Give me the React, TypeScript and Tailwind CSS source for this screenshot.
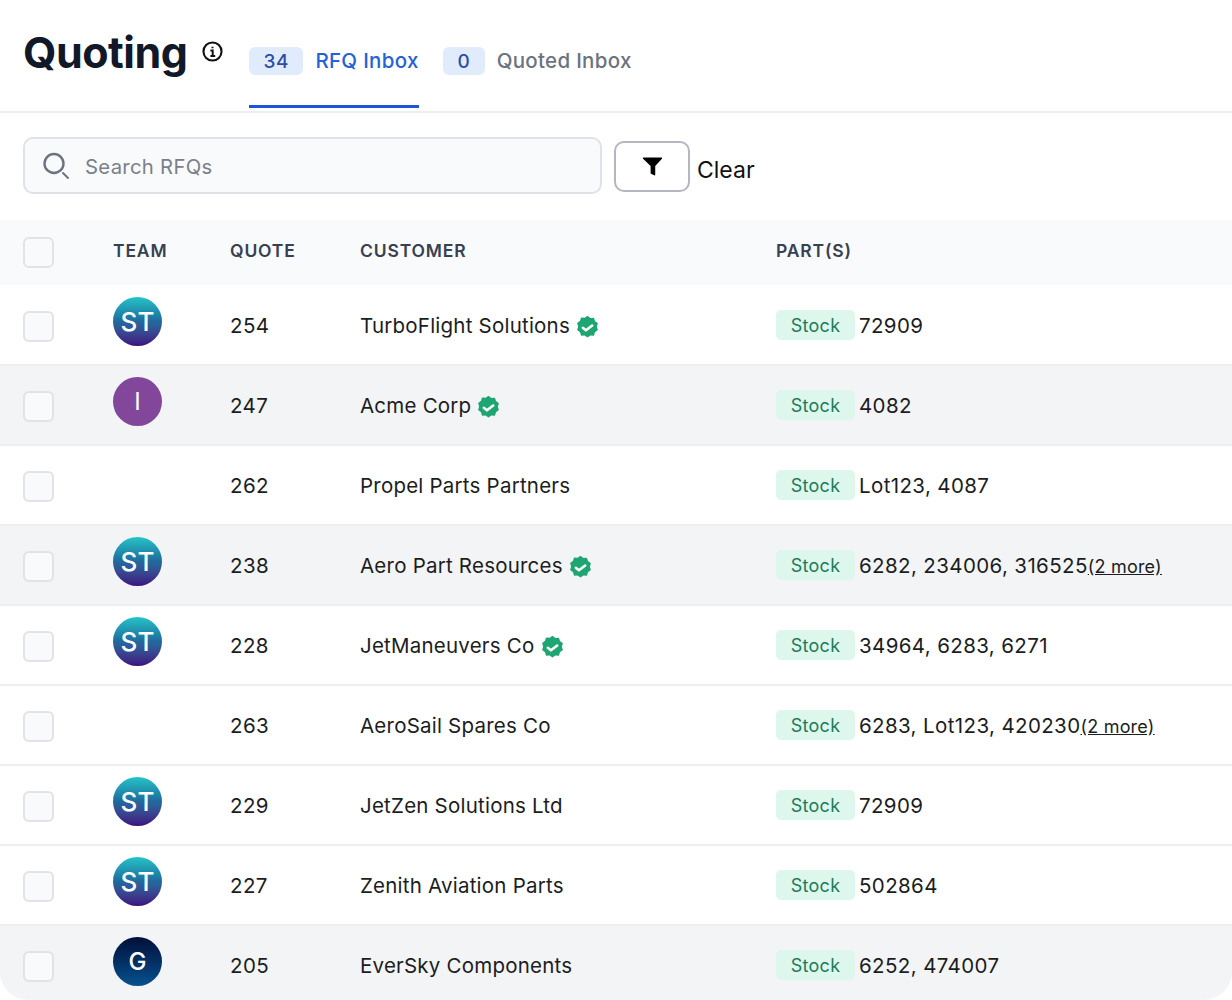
type Row = {
  quote: string;
  customer: string;
  verified?: boolean;
  parts: string;
  more?: boolean;
  team?: "ST" | "I" | "G";
  shaded?: boolean;
};

const rows: Row[] = [
  { quote: "254", customer: "TurboFlight Solutions", verified: true, parts: "72909", team: "ST" },
  { quote: "247", customer: "Acme Corp", verified: true, parts: "4082", team: "I", shaded: true },
  { quote: "262", customer: "Propel Parts Partners", parts: "Lot123, 4087" },
  { quote: "238", customer: "Aero Part Resources", verified: true, parts: "6282, 234006, 316525", more: true, team: "ST", shaded: true },
  { quote: "228", customer: "JetManeuvers Co", verified: true, parts: "34964, 6283, 6271", team: "ST" },
  { quote: "263", customer: "AeroSail Spares Co", parts: "6283, Lot123, 420230", more: true },
  { quote: "229", customer: "JetZen Solutions Ltd", parts: "72909", team: "ST" },
  { quote: "227", customer: "Zenith Aviation Parts", parts: "502864", team: "ST" },
  { quote: "205", customer: "EverSky Components", parts: "6252, 474007", team: "G", shaded: true },
];

function Avatar({ team }: { team: "ST" | "I" | "G" }) {
  if (team === "I") {
    return (
      <div className="-mt-[9px] flex h-[49px] w-[49px] items-center justify-center rounded-full bg-[#82479b] text-[24px] text-white">
        I
      </div>
    );
  }
  if (team === "G") {
    return (
      <div className="-mt-[9px] flex h-[49px] w-[49px] items-center justify-center rounded-full bg-gradient-to-b from-[#020f3a] to-[#07528f] text-[24px] font-medium text-white">
        G
      </div>
    );
  }
  return (
    <div className="-mt-[9px] flex h-[49px] w-[49px] items-center justify-center rounded-full bg-gradient-to-b from-[#25c4c6] via-[#1f6a9c] to-[#3c1180] text-[26px] font-medium text-white">
      ST
    </div>
  );
}

function VerifiedBadge() {
  return (
    <svg viewBox="0 0 24 24" className="ml-[5px] mt-[3px] h-[25px] w-[25px] shrink-0">
      <path
        fill="#1ea672"
        d="M12 .8l2.800 2 3.400-.2 1 3.200 2.800 2.100-1 3.300 1 3.300-2.800 2.100-1 3.200-3.400-.2-2.800 2-2.800-2-3.400.2-1-3.200L2 14.300l1-3.300-1-3.300 2.800-2.100 1-3.200 3.400.2z"
      />
      <path d="M7.500 12.300l3 2.400 6-4.600" fill="none" stroke="#fff" strokeWidth="2.500" strokeLinecap="round" strokeLinejoin="round" />
    </svg>
  );
}

function Checkbox() {
  return <div className="h-[31px] w-[31px] rounded-[6px] border-2 border-[#e1e3e7] bg-[#f9fafb]" />;
}

export default function App() {
  return (
    <div className="h-[1000px] w-[1232px] overflow-hidden rounded-b-[28px] bg-white font-['Inter',sans-serif] text-[#1b1d21]">
      <header className="flex h-[113px] border-b-2 border-[#eceef0] pl-[23px]">
        <h1 className="mt-[24px] text-[43px] font-bold leading-[56px] tracking-[-0.5px] text-[#111827]">Quoting</h1>
        <svg viewBox="0 0 20 20" className="ml-[15px] mt-[41px] h-[21px] w-[21px]" fill="none" stroke="#111" strokeWidth="2">
          <circle cx="10" cy="10" r="8.600" />
          <path d="M8 9h2.200v5M8 14.200h4.600M10 5.400v1.400" strokeWidth="1.900" />
        </svg>
        <nav className="ml-[26px] flex gap-[24px]">
          <div className="flex h-[108px] items-start gap-[12px] border-b-[3px] border-[#1d56d8] pt-[47px]">
            <span className="flex h-[28px] w-[54px] items-center justify-center rounded-[6px] bg-[#e0ecfc] pt-[2px] text-[19px] font-medium tracking-[0.6px] text-[#2f4da5]">34</span>
            <span className="text-[20.500px] font-medium leading-[28px] tracking-[0.3px] text-[#2563d3]">RFQ Inbox</span>
          </div>
          <div className="flex items-start gap-[12px] pt-[47px]">
            <span className="flex h-[28px] w-[42px] items-center justify-center rounded-[6px] bg-[#e0ecfc] pt-[2px] text-[19px] font-medium text-[#2f4da5]">0</span>
            <span className="text-[20.500px] font-medium leading-[28px] tracking-[0.3px] text-[#6b7280]">Quoted Inbox</span>
          </div>
        </nav>
      </header>

      <div className="flex h-[107px] pl-[23px] pt-[24px]">
        <div className="flex h-[57px] w-[579px] items-center rounded-[10px] border-2 border-[#dfe2e7] bg-[#f9fafb] pl-[17px]">
          <svg viewBox="0 0 28 28" className="h-[28px] w-[28px]" fill="none" stroke="#6b7280" strokeLinecap="round">
            <circle cx="12" cy="11.500" r="9.500" strokeWidth="2.400" />
            <path d="M21 21l5 5" strokeWidth="2" />
          </svg>
          <span className="ml-[15px] pt-[4px] text-[20.300px] tracking-[0.3px] text-[#7a808a]">Search RFQs</span>
        </div>
        <button className="ml-[12px] mt-[4px] flex h-[51px] w-[76px] items-center justify-center rounded-[10px] border-2 border-[#b3b7c0] bg-white">
          <svg viewBox="0 0 20 20" className="mb-[1px] h-[21px] w-[21px]" fill="#000">
            <path d="M1.500 1.500h17a.6.6 0 0 1 .5 1L12.600 9.500v8.300a.7.7 0 0 1-1 .6l-3-1.600a.8.8 0 0 1-.4-.7v-6.600L1 2.500a.6.6 0 0 1 .5-1z" />
          </svg>
        </button>
        <span className="ml-[7px] mt-[17px] text-[23px] leading-[32px] text-[#111]">Clear</span>
      </div>

      <div className="grid h-[65px] grid-cols-[113px_117px_130px_416px_1fr] items-center bg-[#f9fafb] text-[17.500px] font-semibold tracking-[0.85px] text-[#374151]">
        <div className="pl-[23px]"><Checkbox /></div>
        <div className="pb-[3px]">TEAM</div>
        <div className="pb-[3px]">QUOTE</div>
        <div className="pb-[3px]">CUSTOMER</div>
        <div className="pb-[3px]">PART(S)</div>
      </div>

      <div className="pt-px">
        {rows.map((row) => (
          <div
            key={row.quote}
            className={`grid h-[80px] grid-cols-[113px_117px_130px_416px_1fr] items-center border-b-2 border-[#eceef0] pt-[2px] text-[20.500px] ${row.shaded ? "bg-[#f3f4f6]" : "bg-white"}`}
          >
            <div className="pl-[23px]"><Checkbox /></div>
            <div>{row.team && <Avatar team={row.team} />}</div>
            <div className="tracking-[0.4px]">{row.quote}</div>
            <div className="flex items-center tracking-[0.22px]">
              {row.customer}
              {row.verified && <VerifiedBadge />}
            </div>
            <div className="flex items-center tracking-[0.38px]">
              <span className="-mt-[2px] flex h-[30px] w-[79px] items-center justify-center rounded-[5px] bg-[#def7ec] text-[18px] tracking-[0.3px] text-[#1f7a5c]">Stock</span>
              <span className="ml-[4px]">{row.parts}</span>
              {row.more && <span className="text-[18px] tracking-[0.2px] underline">(2 more)</span>}
            </div>
          </div>
        ))}
      </div>
    </div>
  );
}
